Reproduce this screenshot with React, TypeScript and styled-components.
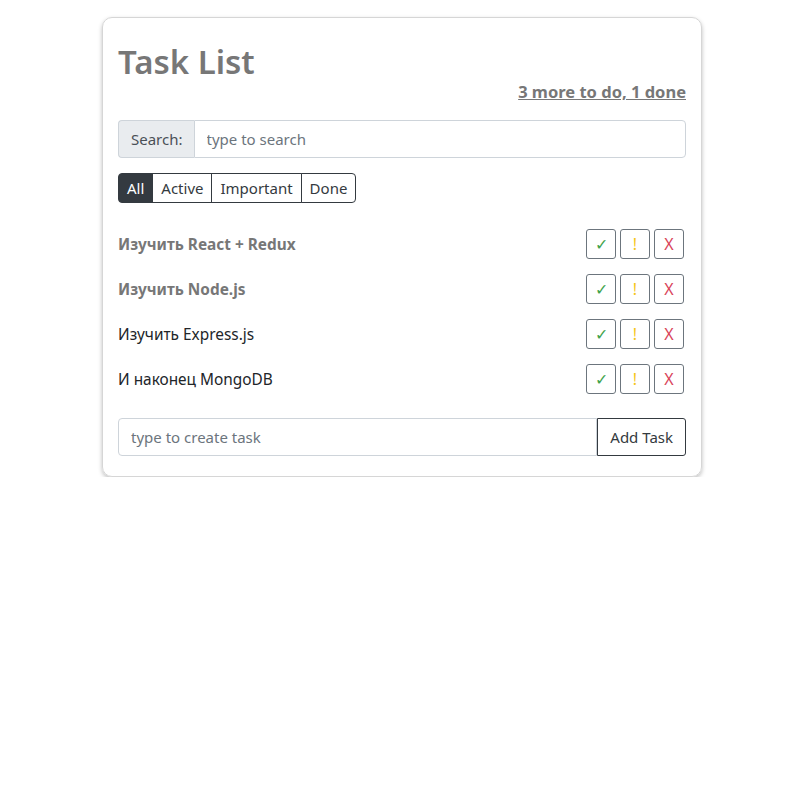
import React from 'react';
import styled, { createGlobalStyle } from "styled-components";

type Task = {
    label: string
    important?: boolean
}

const tasks: Task[] = [
    { label: "Изучить React + Redux", important: true },
    { label: "Изучить Node.js", important: true },
    { label: "Изучить Express.js" },
    { label: "И наконец MongoDB" },
];

const filters = ["All", "Active", "Important", "Done"];

const GlobalStyle = createGlobalStyle`
    body {
        margin: 0;
        background: #fff;
        font-family: "Noto Sans", "Open Sans", sans-serif;
        color: #212529;
    }
`

const App = () => {
    return (
        <Page>
            <GlobalStyle/>
            <Card>
                <Header>
                    <Title>Task List</Title>
                    <Stats>3 more to do, 1 done</Stats>
                </Header>
                <SearchGroup>
                    <SearchLabel>Search:</SearchLabel>
                    <TextInput placeholder="type to search"/>
                </SearchGroup>
                <FilterGroup>
                    {filters.map((f, i) => (
                        <FilterButton key={f} active={i === 0}>{f}</FilterButton>
                    ))}
                </FilterGroup>
                <TaskList>
                    {tasks.map(t => (
                        <TaskRow key={t.label}>
                            <TaskLabel important={t.important}>{t.label}</TaskLabel>
                            <Actions>
                                <ActionButton color="#3fa34d">✓</ActionButton>
                                <ActionButton color="#f5c518">!</ActionButton>
                                <ActionButton color="#d9445a">X</ActionButton>
                            </Actions>
                        </TaskRow>
                    ))}
                </TaskList>
                <AddForm>
                    <TextInput placeholder="type to create task"/>
                    <AddButton>Add Task</AddButton>
                </AddForm>
            </Card>
        </Page>
    );
};

export default App;

const Page = styled.div`
    padding: 17px 2px 0 0;
    display: flex;
    justify-content: center;
`

const Card = styled.div`
    width: 600px;
    box-sizing: border-box;
    border: 1px solid #d6d6d6;
    border-radius: 10px;
    box-shadow: 0 2px 4px rgba(0, 0, 0, 0.25);
    padding: 22px 15px 20px;
    display: flex;
    flex-direction: column;
`

const Header = styled.div`
    display: flex;
    flex-direction: column;
`

const Title = styled.h1`
    margin: 0;
    font-size: 33px;
    font-weight: 600;
    line-height: 44px;
    color: #777;
`

const Stats = styled.a`
    align-self: flex-end;
    margin-top: -4px;
    font-size: 16.5px;
    font-weight: 700;
    line-height: 24px;
    color: #777;
    text-decoration: underline;
`

const SearchGroup = styled.div`
    margin-top: 16px;
    display: flex;
    height: 38px;
`

const SearchLabel = styled.span`
    display: flex;
    align-items: center;
    padding: 0 11px 0 12px;
    background: #e9ecef;
    border: 1px solid #ced4da;
    border-right: none;
    border-radius: 4px 0 0 4px;
    font-size: 15px;
    color: #495057;
`

const TextInput = styled.input`
    flex: 1;
    min-width: 0;
    box-sizing: border-box;
    height: 38px;
    padding: 0 12px;
    border: 1px solid #ced4da;
    border-radius: 0 4px 4px 0;
    font-family: inherit;
    font-size: 15px;
    color: #495057;
    outline: none;

    &::placeholder {
        color: #6c757d;
    }
`

const FilterGroup = styled.div`
    margin-top: 15px;
    display: flex;
    align-self: flex-start;
`

const FilterButton = styled.button<{ active?: boolean }>`
    height: 30px;
    padding: 0 8px;
    font-family: inherit;
    font-size: 15px;
    background: ${props => props.active ? "#343a40" : "#fff"};
    color: ${props => props.active ? "#fff" : "#343a40"};
    border: 1px solid #343a40;
    margin-left: -1px;
    border-radius: 0;

    &:first-child {
        margin-left: 0;
        border-radius: 4px 0 0 4px;
    }

    &:last-child {
        border-radius: 0 4px 4px 0;
    }
`

const TaskList = styled.div`
    margin-top: 26px;
    display: flex;
    flex-direction: column;
    gap: 15px;
`

const TaskRow = styled.div`
    display: flex;
    align-items: center;
    justify-content: space-between;
    padding-right: 2px;
`

const TaskLabel = styled.span<{ important?: boolean }>`
    font-size: 15.4px;
    font-weight: ${props => props.important ? 700 : 400};
    color: ${props => props.important ? "#777" : "#212529"};
`

const Actions = styled.div`
    display: flex;
    gap: 4px;
`

const ActionButton = styled.button<{ color: string }>`
    width: 30px;
    height: 30px;
    padding: 0;
    background: #fff;
    border: 1px solid #6c757d;
    border-radius: 3px;
    font-family: inherit;
    font-size: 16px;
    color: ${props => props.color};
`

const AddForm = styled.div`
    margin-top: 24px;
    display: flex;
    height: 38px;

    input {
        border-radius: 4px 0 0 4px;
    }
`

const AddButton = styled.button`
    padding: 0 12px;
    background: #fff;
    border: 1px solid #343a40;
    border-radius: 0 3px 3px 0;
    font-family: inherit;
    font-size: 15px;
    color: #343a40;
`
